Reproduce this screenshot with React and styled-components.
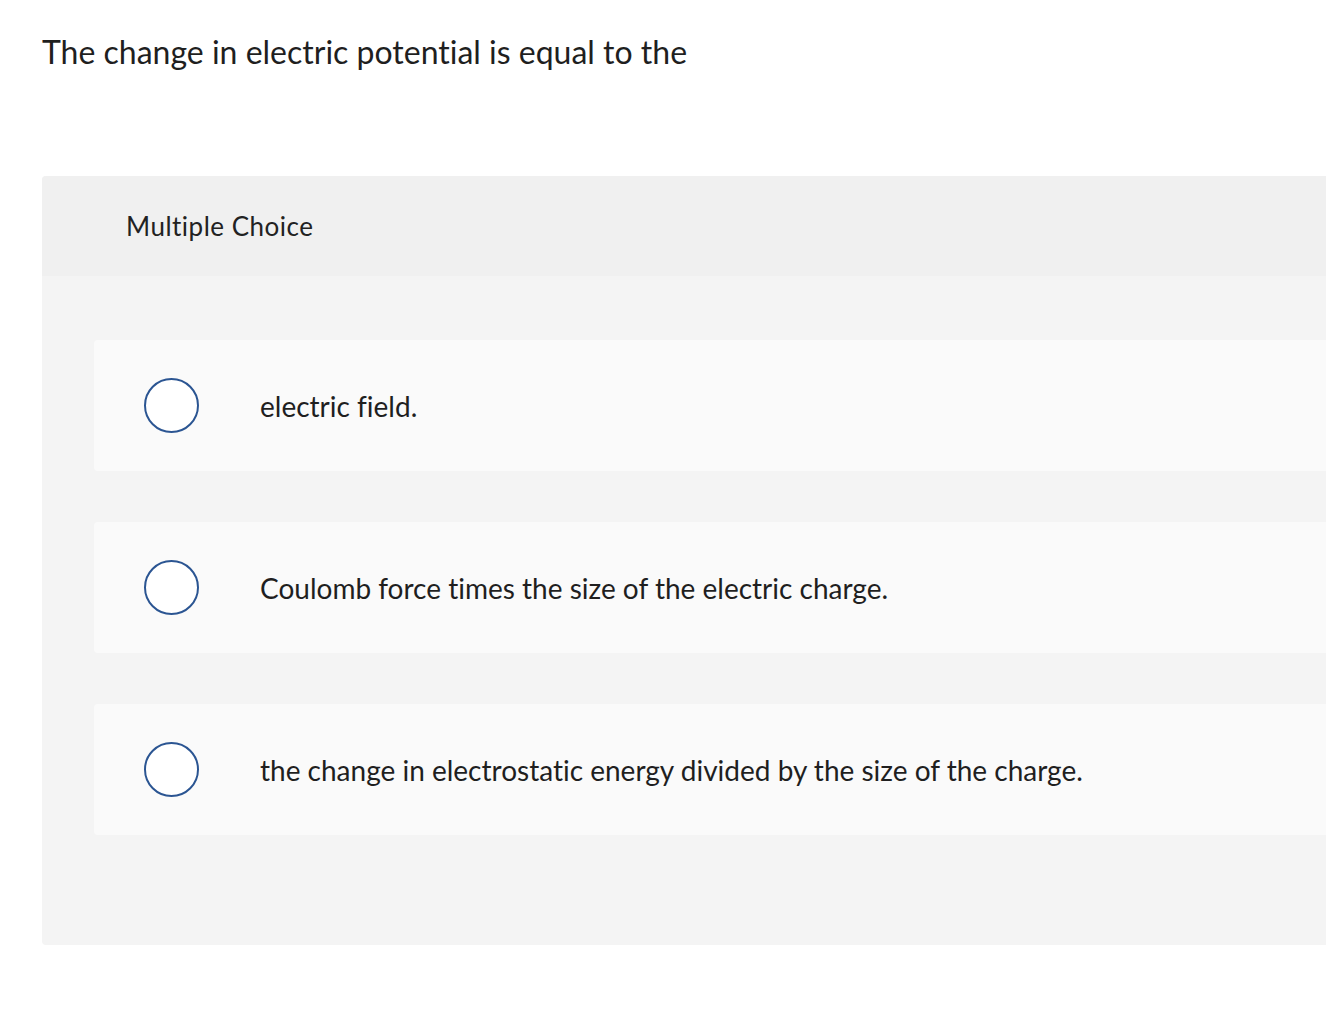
import styled, { createGlobalStyle } from 'styled-components'

const GlobalStyle = createGlobalStyle`
    html, body {
        margin: 0;
        padding: 0;
        background: #ffffff;
    }
    body {
        font-family: Lato, 'Liberation Sans', sans-serif;
        font-variant-ligatures: none;
        font-feature-settings: 'liga' 0, 'dlig' 0;
        color: #1f1f1f;
    }
`

const Page = styled.div`
    padding: 30px 0 0 42px;
    width: 1326px;
    box-sizing: border-box;
`

const Question = styled.p`
    margin: 0;
    font-size: 32px;
    line-height: 44px;
    color: #1f1f1f;
`

const Card = styled.section`
    margin-top: 102px;
    border-radius: 4px 0 0 4px;
    overflow: hidden;
    background: #f4f4f4;
`

const CardHeader = styled.header`
    height: 100px;
    display: flex;
    align-items: center;
    padding-left: 84px;
    background: #f0f0f0;
    font-size: 26px;
    letter-spacing: 0.5px;
    color: #222;
`

const Choices = styled.div`
    display: flex;
    flex-direction: column;
    gap: 51px;
    padding: 64px 0 110px 52px;
`

const Choice = styled.label`
    display: flex;
    align-items: center;
    height: 131px;
    border-radius: 4px 0 0 4px;
    background: #fafafa;
    cursor: pointer;
`

const Radio = styled.span`
    flex: none;
    width: 51px;
    height: 51px;
    margin-left: 50px;
    border: 2px solid #2b5592;
    border-radius: 50%;
    background: #fff;
`

const ChoiceText = styled.span`
    margin-left: 61px;
    font-size: 28px;
    color: #1f1f1f;
`

const options = [
    'electric field.',
    'Coulomb force times the size of the electric charge.',
    'the change in electrostatic energy divided by the size of the charge.',
]

export default function App() {
    return (
        <Page>
            <GlobalStyle />
            <Question>The change in electric potential is equal to the</Question>
            <Card>
                <CardHeader>Multiple Choice</CardHeader>
                <Choices>
                    {options.map((text) => (
                        <Choice key={text}>
                            <Radio />
                            <ChoiceText>{text}</ChoiceText>
                        </Choice>
                    ))}
                </Choices>
            </Card>
        </Page>
    )
}
